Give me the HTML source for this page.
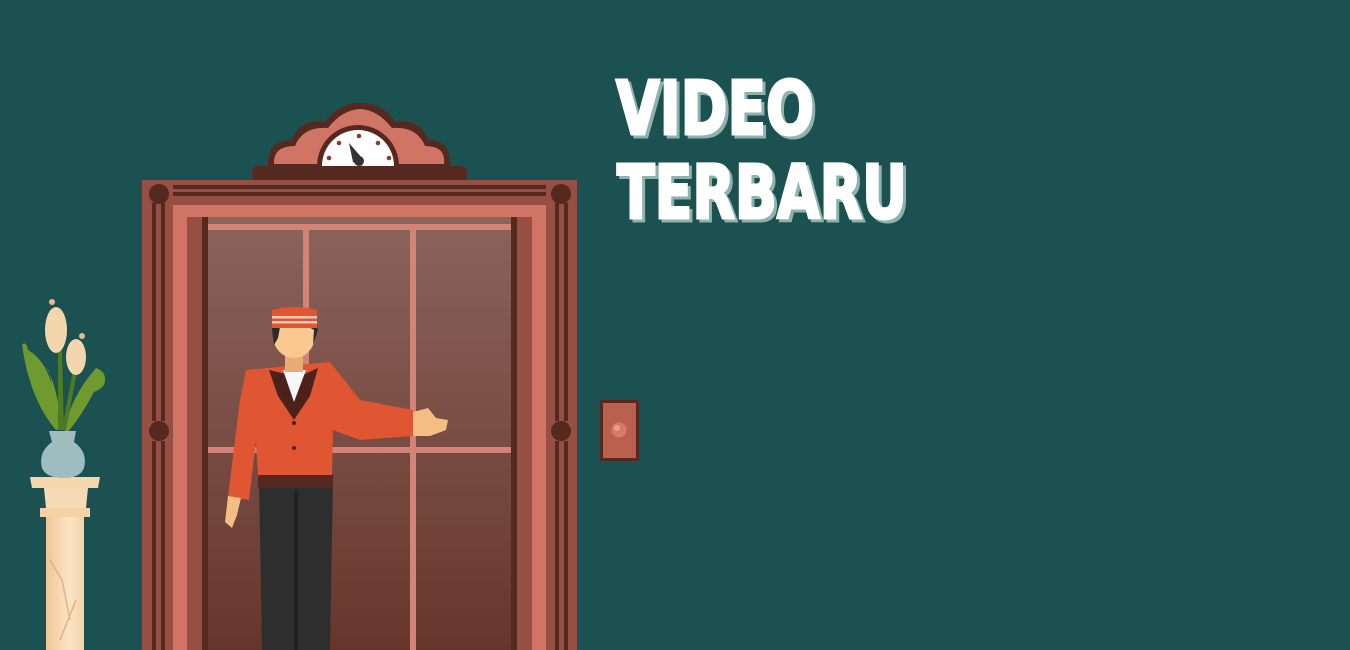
<!DOCTYPE html>
<html><head><meta charset="utf-8"><style>
html,body{margin:0;padding:0;background:#1b5151;width:1350px;height:650px;overflow:hidden}
</style></head><body>
<svg width="1350" height="650" viewBox="0 0 1350 650" xmlns="http://www.w3.org/2000/svg">
<defs>
<linearGradient id="glass" x1="0" y1="0" x2="0" y2="1"><stop offset="0" stop-color="#8b645c"/><stop offset="1" stop-color="#66362c"/></linearGradient>
<linearGradient id="col" x1="0" y1="0" x2="1" y2="0"><stop offset="0" stop-color="#efc596"/><stop offset="0.6" stop-color="#fbe5c6"/><stop offset="1" stop-color="#f3d2a8"/></linearGradient>
</defs>
<rect width="1350" height="650" fill="#1b5151"/>

<!-- crown -->
<rect x="252" y="166" width="215" height="16" rx="7" fill="#55291f"/>
<path d="M268 168 Q266 140 292 140 Q300 118 325 122 Q340 102 360 103 Q382 102 395 122 Q420 118 428 140 Q452 140 450 168 Z" fill="#55291f"/>
<path d="M274 164 Q273 146 295 146 Q303 126 328 128 Q342 110 360 109 Q378 110 392 128 Q417 126 425 146 Q446 146 444 164 Z" fill="#d07565"/>
<path d="M317 166 A41 41 0 0 1 399 166 Z" fill="#55291f"/>
<path d="M322 166 A36 36 0 0 1 394 166 Z" fill="#fff"/>
<g fill="#8a3a30"><circle cx="329" cy="158" r="2.3"/><circle cx="339" cy="143" r="2.3"/><circle cx="359" cy="136" r="2.3"/><circle cx="378" cy="143" r="2.3"/><circle cx="389" cy="158" r="2.3"/></g>
<path d="M349 143 L362 158 L362 166 L353 162 Z" fill="#333"/><circle cx="359" cy="161" r="5" fill="#333"/>

<!-- frame -->
<rect x="142" y="180" width="435" height="470" fill="#964f42"/>
<rect x="173" y="205" width="373" height="445" fill="#d07565"/>
<rect x="187" y="217" width="345" height="433" fill="#964f42"/>
<rect x="202" y="217" width="315" height="433" fill="#55291f"/>
<rect x="208" y="217" width="303" height="433" fill="url(#glass)"/>
<rect x="208" y="224" width="303" height="6" fill="#d38478"/>
<rect x="208" y="447" width="303" height="6" fill="#d38478"/>
<rect x="303" y="224" width="6" height="426" fill="#d38478"/>
<rect x="410" y="224" width="6" height="426" fill="#d38478"/>
<g fill="#55291f">
<rect x="173" y="185" width="373" height="4"/><rect x="173" y="192" width="373" height="4"/>
<circle cx="159" cy="194" r="10"/><circle cx="561" cy="194" r="10"/>
<circle cx="159" cy="431" r="10"/><circle cx="561" cy="431" r="10"/>
<rect x="152" y="203" width="4" height="218"/><rect x="161" y="203" width="4" height="218"/>
<rect x="152" y="441" width="4" height="209"/><rect x="161" y="441" width="4" height="209"/>
<rect x="555" y="203" width="4" height="218"/><rect x="564" y="203" width="4" height="218"/>
<rect x="555" y="441" width="4" height="209"/><rect x="564" y="441" width="4" height="209"/>
</g>

<!-- bellboy -->
<path d="M259 480 L333 480 L330 650 L262 650 Z" fill="#2e2e2e"/>
<rect x="294" y="490" width="4" height="160" fill="#222"/>
<path d="M258 474 L333 474 L333 488 L258 488 Z" fill="#55291f"/>
<path d="M246 370 L330 362 L360 400 L413 410 L413 436 L360 440 L333 430 L332 475 L258 475 L256 440 L249 500 L228 497 L240 400 Z" fill="#e05632"/>
<path d="M269 370 L278 396 L294 420 L310 396 L318 368 L305 374 L286 374 Z" fill="#4a211b"/>
<path d="M283 370 L294 402 L306 370 Z" fill="#f6f6f6"/>
<circle cx="294" cy="423" r="2" fill="#4a211b"/><circle cx="294" cy="448" r="2" fill="#4a211b"/>
<path d="M413 412 L428 408 L436 418 L448 420 L446 430 L430 436 L413 436 Z" fill="#f4bd83"/>
<path d="M228 496 L241 498 L237 515 L232 528 L225 522 Z" fill="#f4bd83"/>
<rect x="285" y="352" width="18" height="20" fill="#e8ac78"/>
<ellipse cx="294" cy="336" rx="21" ry="22" fill="#f9c98f"/>
<path d="M272 330 L274 345 L278 338 L281 322 L300 322 L314 330 L313 345 L318 330 L316 324 L272 324 Z" fill="#2b2b2b"/>
<path d="M272 310 Q294 304 317 310 L317 328 L272 328 Z" fill="#e05632"/>
<rect x="272" y="316" width="45" height="2.5" fill="#f6c8b8"/><rect x="272" y="321" width="45" height="2.5" fill="#f6c8b8"/>

<!-- button panel -->
<rect x="600" y="400" width="39" height="61" fill="#55291f"/>
<rect x="603" y="403" width="33" height="55" fill="#b9604e"/>
<circle cx="619" cy="430" r="7.5" fill="#d97a68"/><circle cx="617" cy="428" r="3" fill="#e9a091"/>

<!-- plant & column -->
<path d="M46 478 L84 478 L84 650 L46 650 Z" fill="url(#col)"/>
<path d="M40 508 L90 508 L90 517 L40 517 Z" fill="#f4d2a6"/>
<path d="M30 477 L100 477 L98 488 L32 488 Z" fill="#f6d6ac"/>
<path d="M44 488 L88 488 L86 508 L46 508 Z" fill="#f7dbb6"/>
<path d="M50 560 L62 580 L70 620 M76 600 L60 640" stroke="#e4b27c" stroke-width="1.5" fill="none"/>
<path d="M56 430 Q30 400 22 345 Q26 340 28 350 Q45 360 52 385 Q50 370 46 368 Q56 380 62 428 Z" fill="#6f9a30"/>
<path d="M64 430 Q72 395 96 368 Q108 372 104 385 Q100 390 94 392 Q82 415 68 432 Z" fill="#6f9a30"/>
<path d="M58 430 L58 350 L62 350 L64 430 Z" fill="#4e7a23"/>
<path d="M62 430 L73 370 L77 372 L66 430 Z" fill="#4e7a23"/>
<ellipse cx="56" cy="330" rx="11" ry="23" fill="#f3d6ac"/>
<ellipse cx="76" cy="357" rx="10" ry="18" fill="#f3d6ac"/>
<circle cx="52" cy="302" r="3" fill="#e8b888"/><circle cx="82" cy="336" r="3" fill="#e8b888"/>
<path d="M49 431 L76 431 L74 442 Q88 452 84 468 Q80 478 64 478 Q46 478 42 468 Q38 452 52 442 Z" fill="#9fbcc0"/>

<!-- title -->
<g font-family="'DejaVu Sans','Liberation Sans',sans-serif" font-weight="bold" font-size="74">
<text x="619" y="137" textLength="198" lengthAdjust="spacingAndGlyphs" fill="#8fb2ad" stroke="#8fb2ad" stroke-width="3">VIDEO</text>
<text x="616" y="134" textLength="198" lengthAdjust="spacingAndGlyphs" fill="#fff" stroke="#fff" stroke-width="3">VIDEO</text>
<text x="620" y="221" textLength="290" lengthAdjust="spacingAndGlyphs" fill="#8fb2ad" stroke="#8fb2ad" stroke-width="3">TERBARU</text>
<text x="617" y="218" textLength="290" lengthAdjust="spacingAndGlyphs" fill="#fff" stroke="#fff" stroke-width="3">TERBARU</text>
</g>
</svg>
</body></html>
